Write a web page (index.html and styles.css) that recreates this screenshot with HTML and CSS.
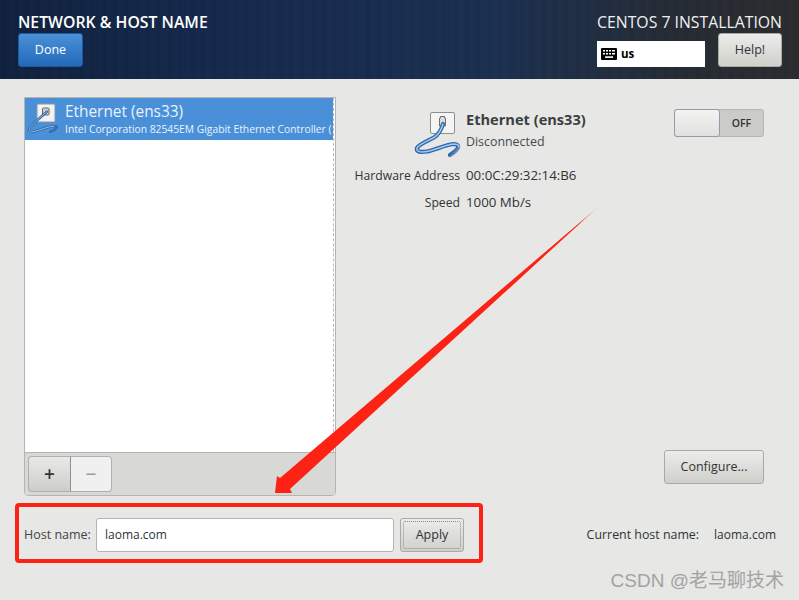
FILE: index.html
```html
<!DOCTYPE html>
<html lang="en">
<head>
<meta charset="utf-8">
<title>Network &amp; Host Name</title>
<link rel="stylesheet" href="styles.css">
</head>
<body>
<div class="page">
  <header class="topbar">
    <div class="top-left">
      <h1 class="title">NETWORK &amp; HOST NAME</h1>
      <button class="btn btn-done">Done</button>
    </div>
    <div class="top-right">
      <div class="product">CENTOS 7 INSTALLATION</div>
      <div class="top-controls">
        <div class="kbd">
          <svg class="kbd-icon" width="16" height="12" viewBox="0 0 16 12"><rect width="16" height="12" rx="1" fill="#000"/><g fill="#fff"><rect x="2" y="2" width="2" height="1.5"/><rect x="5" y="2" width="2" height="1.5"/><rect x="8" y="2" width="2" height="1.5"/><rect x="11" y="2" width="3" height="1.5"/><rect x="2" y="5" width="2" height="1.5"/><rect x="5" y="5" width="2" height="1.5"/><rect x="8" y="5" width="2" height="1.5"/><rect x="11" y="5" width="3" height="1.5"/><rect x="4" y="8.3" width="8" height="1.6"/></g></svg>
          <span>us</span>
        </div>
        <button class="btn btn-help">Help!</button>
      </div>
    </div>
  </header>

  <main class="content">
    <section class="list-panel">
      <div class="list">
        <div class="row-selected">
          <svg class="row-icon" width="34" height="34" viewBox="0 0 34 34">
            <rect x="9" y="3" width="18" height="18" rx="1" fill="#f2f2f0" stroke="#8896a6"/>
            <rect x="14.500" y="7" width="6.500" height="7" rx="1" fill="#cfd2d2" stroke="#666"/>
            <path d="M18.700 10.700 C13 16 7 21 2 26.500 C0 29.500 3 31 6 30.500 C12 29 20 25.500 26 25 C30 25 30 27.500 22 31" fill="none" stroke="#3b6ba8" stroke-width="2.600" stroke-linecap="round"/>
            <path d="M18.700 10.700 C13 16 7 21 2 26.500 C0 29.500 3 31 6 30.500 C12 29 20 25.500 26 25" fill="none" stroke="#8fb6e4" stroke-width="1" stroke-linecap="round"/>
          </svg>
          <div class="row-text">
            <div class="row-name">Ethernet (ens33)</div>
            <div class="row-desc">Intel Corporation 82545EM Gigabit Ethernet Controller (</div>
          </div>
        </div>
      </div>
      <div class="toolbar">
        <div class="btn-group">
          <button class="tool tool-add">+</button>
          <button class="tool tool-remove">&minus;</button>
        </div>
      </div>
    </section>

    <section class="details">
      <div class="detail-head">
        <div class="detail-main">
          <svg class="detail-icon" width="50" height="48" viewBox="0 0 50 48">
            <defs><linearGradient id="cablefade" gradientUnits="userSpaceOnUse" x1="30" y1="30" x2="46" y2="44"><stop offset="0" stop-color="#2f68ab"/><stop offset=".6" stop-color="#2f68ab"/><stop offset="1" stop-color="#2f68ab" stop-opacity=".1"/></linearGradient></defs>
            <rect x="16.500" y="0.500" width="24" height="21" rx="1.500" fill="#f4f4f2" stroke="#8a8f92"/>
            <path d="M25.500 6 h1 v-1.500 h4 v1.500 h1 v8 h-6z" fill="#dcdddb" stroke="#6b6f70"/>
            <path d="M29 12 C27 19 24 23 20 25.500 C14 29 5 32 3 36 C2 40 7 40.500 13 39.500 C21 38 31 33 39 32 C46 32 47 36 36 43" fill="none" stroke="url(#cablefade)" stroke-width="4.200" stroke-linecap="round"/>
            <path d="M29 12 C27 19 24 23 20 25.500 C14 29 5 32 3 36 C2 40 7 40.500 13 39.500 C21 38 31 33 39 32 C43 32 45 33 45 35" fill="none" stroke="#a6c8ee" stroke-width="1.500" stroke-linecap="round"/>
          </svg>
          <div class="detail-title">
            <div class="detail-name">Ethernet (ens33)</div>
            <div class="detail-status">Disconnected</div>
          </div>
        </div>
        <div class="toggle"><span class="toggle-knob"></span><span class="toggle-label">OFF</span></div>
      </div>
      <dl class="props">
        <dt>Hardware Address</dt><dd>00:0C:29:32:14:B6</dd>
        <dt>Speed</dt><dd>1000 Mb/s</dd>
      </dl>
      <div class="detail-actions"><button class="btn btn-configure">Configure...</button></div>
    </section>
  </main>

  <footer class="hostbar">
    <label class="host-label">Host name:</label>
    <div class="host-input">laoma.com</div>
    <button class="btn btn-apply"><span class="apply-focus">Apply</span></button>
    <div class="current">
      <span>Current host name:</span>
      <span class="current-value">laoma.com</span>
    </div>
  </footer>
</div>

<div class="redbox"></div>
<svg class="arrow" width="799" height="600" viewBox="0 0 799 600">
  <defs><linearGradient id="fade" gradientUnits="userSpaceOnUse" x1="598" y1="207" x2="275" y2="493"><stop offset="0" stop-color="#fc2214" stop-opacity=".2"/><stop offset=".06" stop-color="#fc2214"/><stop offset="1" stop-color="#fc2214"/></linearGradient></defs>
  <path d="M598 207 L290 489 L292 493 L275 493 L277 476 L280 478 Z" fill="url(#fade)"/>
</svg>
<div class="watermark">CSDN @老马聊技术</div>
</body>
</html>
```
FILE: styles.css
```css
* { box-sizing: border-box; }
html, body { margin: 0; padding: 0; }
body {
  width: 799px;
  height: 600px;
  overflow: hidden;
  position: relative;
  background: #e7e7e5;
  color: #2e3436;
  font-family: "Open Sans", "Noto Sans", sans-serif;
  font-size: 12.500px;
}
.page { display: flex; flex-direction: column; height: 600px; }

.topbar {
  height: 79px;
  padding: 14px 17px 0 18px;
  display: flex;
  justify-content: space-between;
  color: #fff;
  background:
    repeating-linear-gradient(90deg, rgba(255,255,255,.006) 0 3px, rgba(0,0,0,.012) 3px 7px, rgba(255,255,255,.009) 7px 11px),
    linear-gradient(90deg, #10213f 0%, #16294e 30%, #1a2f50 62%, #252b34 85%, #2a2b2d 100%);
}
.title { margin: 0 0 2px; font-size: 15.800px; line-height: 17px; font-weight: 600; white-space: nowrap; }
.product { font-size: 15.800px; line-height: 17px; text-align: right; color: #f0f0f0; margin-bottom: 2px; white-space: nowrap; }
.top-controls { display: flex; gap: 13px; align-items: flex-start; }

.btn {
  font: inherit;
  color: #2e3436;
  height: 34px;
  padding: 0 0 2px;
  border: 1px solid #a9a9a5;
  border-radius: 3px;
  background: linear-gradient(#ececea, #cfcfcc);
}
.btn-done {
  display: block;
  width: 65px;
  color: #fff;
  border-color: #1f5a9f;
  background: linear-gradient(#4a90d9, #2469b8);
}
.btn-help { width: 64px; }
.kbd {
  margin-top: 8px;
  width: 108px;
  height: 26px;
  padding-bottom: 1px;
  background: #fff;
  color: #000;
  display: flex;
  align-items: center;
  gap: 4px;
  padding-left: 4px;
  font-size: 11.500px;
  font-weight: 700;
}

.content { height: 360px; padding: 18px 35px 0 24px; display: flex; flex: none; }
.list-panel {
  width: 312px;
  height: 399px;
  flex: none;
  display: flex;
  flex-direction: column;
  border: 1px solid #b4b4b1;
  border-radius: 0 0 4px 4px;
  background: #fff;
}
.list { flex: 1; border-right: 1px dashed #bdbdbd; margin-right: 1px; }
.row-selected {
  height: 42px;
  background: #4a90d9;
  color: #eaf2fb;
  display: flex;
  align-items: flex-start;
  overflow: hidden;
}
.row-icon { flex: none; margin: 3px 0 0 3px; }
.row-text { margin-left: 3px; min-width: 0; white-space: nowrap; }
.row-name { font-size: 15.400px; line-height: 17px; margin-top: 5px; }
.row-desc { font-size: 10.300px; line-height: 14px; margin-top: 2px; }
.toolbar {
  height: 43px;
  flex: none;
  padding: 3px;
  background: #d8d8d6;
  border-top: 1px solid #b4b4b1;
  border-radius: 0 0 4px 4px;
}
.btn-group { display: flex; width: 84px; height: 36px; }
.tool {
  height: 36px;
  padding: 0;
  font: 400 19px/1 "Open Sans", sans-serif;
  border: 1px solid #b0b0ad;
}
.tool-add {
  width: 43px;
  color: #2e3436;
  font-weight: 600;
  border-radius: 4px 0 0 4px;
  background: linear-gradient(#e9e9e7, #cdcdca);
  border-right-color: #8f8f8c;
}
.tool-remove {
  width: 41px;
  color: #9a9c9c;
  font-weight: 600;
  border-left: 0;
  border-radius: 0 4px 4px 0;
  background: #f0f0f0;
}

.details { flex: 1; padding-left: 18px; display: flex; flex-direction: column; }
.detail-head { display: flex; justify-content: space-between; height: 61px; padding-top: 12px; }
.detail-main { display: flex; margin-left: 60px; }
.detail-icon { flex: none; margin-top: 3px; }
.detail-title { margin-left: 2px; }
.detail-name { font-size: 14.600px; font-weight: 700; line-height: 20px; color: #3a3f41; white-space: nowrap; }
.detail-status { font-size: 12.400px; line-height: 17px; margin-top: 4px; color: #444a4c; }
.toggle {
  width: 90px;
  height: 28px;
  display: flex;
  background: #cbcbc8;
  border: 1px solid #b6b6b3;
  border-radius: 3px;
}
.toggle-knob {
  width: 46px;
  margin: -1px 0 -1px -1px;
  border: 1px solid #99a;
  border-radius: 3px;
  background: linear-gradient(#f3f3f1, #e0e0de);
}
.toggle-label { flex: 1; text-align: center; font-size: 10.500px; font-weight: 600; line-height: 26px; color: #333; }
.props {
  margin: 9px 0 0;
  display: grid;
  grid-template-columns: 106px auto;
  column-gap: 6px;
  row-gap: 10px;
  line-height: 17px;
}
.props dt { text-align: right; white-space: nowrap; font-size: 12.200px; }
.props dd { margin: 0; font-size: 13.300px; }
.detail-actions { margin-top: 239px; display: flex; justify-content: flex-end; }
.btn-configure { width: 100px; }

.hostbar {
  margin-top: 79px;
  padding: 0 23px 0 24px;
  height: 34px;
  display: flex;
  align-items: center;
}
.host-label { width: 72px; flex: none; color: #3f4547; padding-bottom: 2px; }
.host-input {
  width: 298px;
  height: 34px;
  flex: none;
  background: #fff;
  border: 1px solid #b4b4b1;
  border-radius: 3px;
  padding-left: 8px;
  line-height: 31px;
  font-size: 12px;
}
.btn-apply { width: 64px; margin-left: 6px; flex: none; padding: 2px; }
.apply-focus { display: block; height: 28px; line-height: 25px; border: 1px dotted #8d8d8a; border-radius: 2px; }
.current { margin-left: auto; display: flex; gap: 15px; padding-bottom: 2px; font-size: 12.400px; }
.current-value { font-size: 12px; line-height: 17px; }

.redbox {
  position: absolute;
  left: 15px;
  top: 503px;
  width: 468px;
  height: 60px;
  border: 4px solid #fc2214;
  border-radius: 4px;
}
.arrow { position: absolute; left: 0; top: 0; pointer-events: none; }
.watermark {
  position: absolute;
  right: 15px;
  top: 570px;
  font-family: "Liberation Sans", "Noto Sans CJK SC", sans-serif;
  font-size: 19px;
  line-height: 22px;
  color: #a3a3a1;
  white-space: nowrap;
}
```
